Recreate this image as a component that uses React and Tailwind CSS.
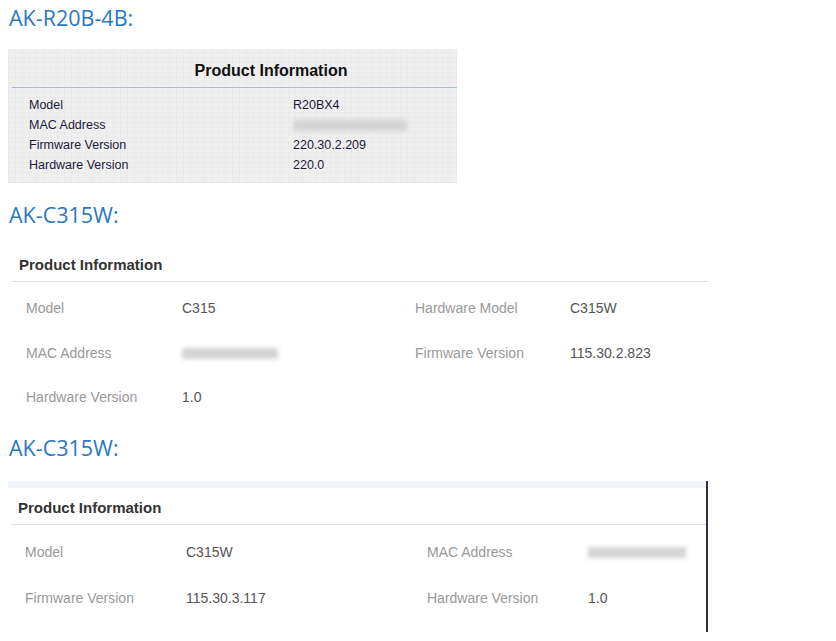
// App.jsx
const heading = "text-[21.5px] leading-[28px] text-[#2a78bf] pl-[9px]";
const headFont = { fontFamily: '"Open Sans", "Noto Sans", sans-serif' };

function Blur({ w }) {
  return (
    <div className="h-[14px] flex items-center">
      <div className={`h-[11px] bg-[#d4d4d4] blur-[2px] ${w}`} />
    </div>
  );
}

function OldBox() {
  const rows = [
    ["Model", "R20BX4"],
    ["MAC Address", null],
    ["Firmware Version", "220.30.2.209"],
    ["Hardware Version", "220.0"],
  ];
  return (
    <div
      className="ml-[8px] w-[449px] h-[134px] bg-[#efefef] pl-[4px] pt-[6px] text-[#1c1a3a] font-['Liberation_Sans',Arial,sans-serif]"
      style={{
        backgroundImage:
          "repeating-linear-gradient(0deg, rgba(0,0,0,0.018) 0 1px, transparent 1px 5px), repeating-linear-gradient(90deg, rgba(0,0,0,0.018) 0 1px, transparent 1px 7px)",
      }}
    >
      <div className="h-[32px] flex items-center justify-center text-[16px] font-bold text-[#111] pl-[73px]">
        Product Information
      </div>
      <div className="h-px bg-[#a6b8db]" />
      <div className="pt-[7px]">
        {rows.map(([k, v]) => (
          <div key={k} className="h-[20px] flex items-center text-[12.5px]">
            <div className="w-[281px] pl-[17px]">{k}</div>
            {v ? <div>{v}</div> : <Blur w="w-[114px]" />}
          </div>
        ))}
      </div>
    </div>
  );
}

function Cell({ label, value, lw, vw, blurW }) {
  return (
    <>
      <div className={`text-[#999] ${lw}`}>{label}</div>
      <div className={`text-[#555] ${vw}`}>
        {value ? value : <Blur w={blurW} />}
      </div>
    </>
  );
}

function NewBoxA() {
  return (
    <div className="ml-[12px] w-[696px] font-['Liberation_Sans',Arial,sans-serif]">
      <div className="h-[28px] flex items-center pl-[7px] text-[15px] font-bold text-[#333] mt-[7px]">
        Product Information
      </div>
      <div className="h-px bg-[#dedede] mt-[2px]" />
      <div className="pl-[14px] pt-[17px] text-[14px]">
        <div className="h-[19px] flex items-center">
          <Cell label="Model" value="C315" lw="w-[156px]" vw="w-[233px]" />
          <Cell label="Hardware Model" value="C315W" lw="w-[155px]" />
        </div>
        <div className="h-[19px] mt-[25.5px] flex items-center">
          <Cell label="MAC Address" lw="w-[156px]" vw="w-[233px]" blurW="w-[96px]" />
          <Cell label="Firmware Version" value="115.30.2.823" lw="w-[155px]" />
        </div>
        <div className="h-[19px] mt-[25.5px] flex items-center">
          <Cell label="Hardware Version" value="1.0" lw="w-[156px]" />
        </div>
      </div>
    </div>
  );
}

function NewBoxB() {
  return (
    <div className="ml-[8px] w-[700px] h-[151px] border-r-2 border-[#2b323b] font-['Liberation_Sans',Arial,sans-serif]">
      <div className="h-[7px] bg-[#f0f3f7]" />
      <div className="h-[36px] flex items-center pl-[10px] text-[15px] font-bold text-[#333] pt-[4px]">
        Product Information
      </div>
      <div className="h-px bg-[#dedede] ml-[3px]" />
      <div className="pl-[17px] pt-[18px] text-[14px]">
        <div className="h-[19px] flex items-center">
          <Cell label="Model" value="C315W" lw="w-[161px]" vw="w-[241px]" />
          <Cell label="MAC Address" lw="w-[161px]" blurW="w-[98px]" />
        </div>
        <div className="h-[19px] mt-[27px] flex items-center">
          <Cell label="Firmware Version" value="115.30.3.117" lw="w-[161px]" vw="w-[241px]" />
          <Cell label="Hardware Version" value="1.0" lw="w-[161px]" />
        </div>
      </div>
    </div>
  );
}

export default function App() {
  return (
    <div className="w-[836px] h-[641px] bg-white overflow-hidden pt-[4px]">
      <div className={heading} style={headFont}>AK-R20B-4B:</div>
      <div className="h-[17px]" />
      <OldBox />
      <div className="h-[18px]" />
      <div className={heading} style={headFont}>AK-C315W:</div>
      <div className="h-[15px]" />
      <NewBoxA />
      <div className="h-[27px]" />
      <div className={heading} style={headFont}>AK-C315W:</div>
      <div className="h-[19px]" />
      <NewBoxB />
    </div>
  );
}
